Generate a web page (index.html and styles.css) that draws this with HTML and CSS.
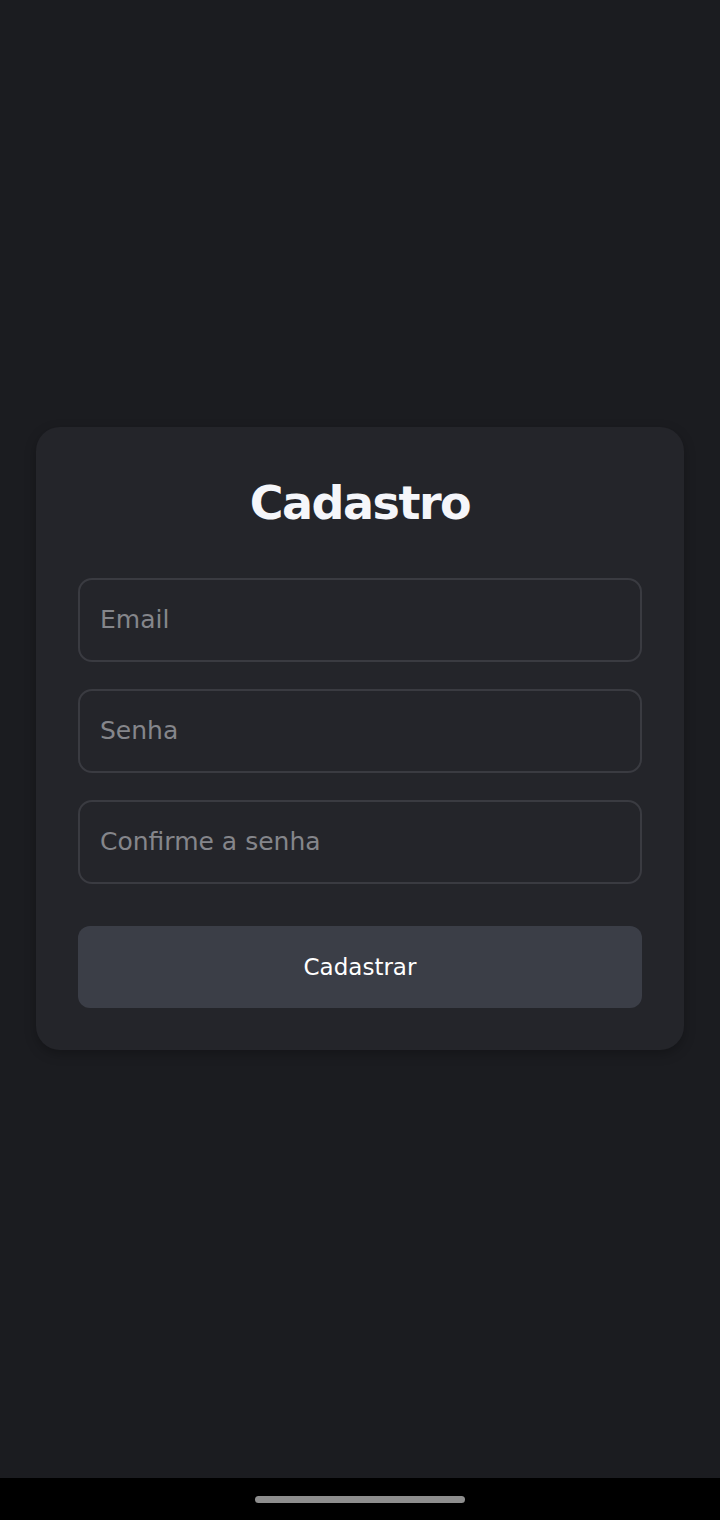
FILE: index.html
```html
<!DOCTYPE html>
<html lang="pt-BR">
<head>
<meta charset="utf-8">
<title>Cadastro</title>
<link rel="stylesheet" href="styles.css">
</head>
<body>
<div class="screen">
  <main class="main">
    <form class="card">
      <h1 class="title">Cadastro</h1>
      <input class="field" type="email" placeholder="Email">
      <input class="field" type="password" placeholder="Senha">
      <input class="field" type="password" placeholder="Confirme a senha">
      <button class="btn" type="button">Cadastrar</button>
    </form>
  </main>
  <div class="navbar"><span class="handle"></span></div>
</div>
</body>
</html>
```
FILE: styles.css
```css
* { box-sizing: border-box; }
html, body { margin: 0; padding: 0; }
body {
  background: #1b1c20;
  font-family: "DejaVu Sans", "Noto Sans", sans-serif;
}
.screen {
  width: 720px;
  height: 1520px;
  display: flex;
  flex-direction: column;
}
.main {
  flex: 1;
  display: flex;
  align-items: center;
  justify-content: center;
  padding-bottom: 2px;
}
.card {
  width: 648px;
  background: #24252a;
  border-radius: 24px;
  padding: 42px;
  display: flex;
  flex-direction: column;
  box-shadow: 0 4px 12px rgba(0,0,0,0.25);
}
.title {
  margin: 0 0 41px;
  text-align: center;
  color: #f5f6fa;
  font-size: 46px;
  line-height: 68px;
  font-weight: 700;
  letter-spacing: -1.5px;
}
.field {
  height: 84px;
  margin: 0 0 27px;
  padding: 0 20px;
  background: #24252a;
  border: 2px solid #3a3b41;
  border-radius: 14px;
  color: #ffffff;
  font-family: inherit;
  font-size: 25px;
  outline: none;
}
.field::placeholder { color: #85868b; }
.field:last-of-type { margin-bottom: 42px; }
.btn {
  height: 82px;
  border: none;
  border-radius: 12px;
  background: #3b3e47;
  color: #ffffff;
  font-family: inherit;
  font-size: 23px;
  cursor: pointer;
}
.navbar {
  height: 42px;
  background: #000000;
  display: flex;
  align-items: center;
  justify-content: center;
}
.handle {
  width: 210px;
  height: 7px;
  border-radius: 4px;
  background: #8e8e8e;
}
```
